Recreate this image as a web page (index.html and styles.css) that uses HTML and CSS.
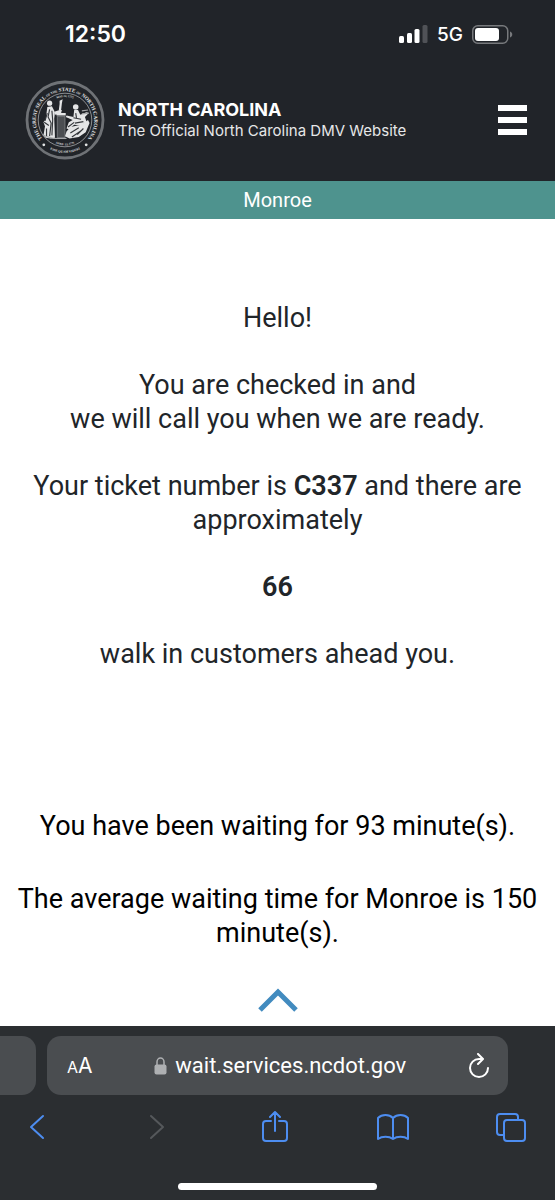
FILE: index.html
```html
<!DOCTYPE html>
<html lang="en">
<head>
    <meta charset="UTF-8">
    <meta name="viewport" content="width=device-width, initial-scale=1.0">
    <title>NCDMV - Monroe</title>
    <link rel="stylesheet" href="styles.css">
</head>
<body>
    <div class="status-bar">
        <span class="time">12:50</span>
        <div class="status-icons">
            <svg class="signal" viewBox="0 0 29 18" aria-hidden="true">
                <rect x="0" y="11" width="5" height="7" rx="1.5"/>
                <rect x="8" y="8" width="5" height="10" rx="1.5"/>
                <rect x="15.5" y="4" width="5" height="14" rx="1.5"/>
                <rect class="dim" x="23.5" y="0" width="5" height="18" rx="1.5"/>
            </svg>
            <span class="network">5G</span>
            <svg class="battery" viewBox="0 0 41 19" aria-hidden="true">
                <rect class="shell" x="0.75" y="0.75" width="35" height="17.5" rx="5"/>
                <rect x="3" y="3" width="24" height="13" rx="3"/>
                <path class="cap" d="M38 6.5c3 1 3 5 0 6z"/>
            </svg>
        </div>
    </div>

    <header class="header">
        <a class="brand" href="#">
            <svg class="seal" viewBox="0 0 200 200" aria-hidden="true">
                <defs>
                    <path id="ring-top" d="M48 152A73 73 0 1 1 152 152"/>
                    <path id="ring-bottom" d="M44 160A82 82 0 0 0 156 160"/>
                    <path id="date-top" d="M50 72A57 57 0 0 1 150 72"/>
                    <path id="date-bottom" d="M55 144A63 63 0 0 0 145 144"/>
                </defs>
                <circle class="rim" cx="100" cy="100" r="95"/>
                <circle class="line" cx="100" cy="100" r="67"/>
                <text class="seal-text"><textPath href="#ring-top" startOffset="50%">THE GREAT SEAL <tspan class="tiny">OF THE</tspan> STATE <tspan class="tiny">OF</tspan> NORTH CAROLINA</textPath></text>
                <text class="seal-text tiny"><textPath href="#ring-bottom" startOffset="50%">ESSE QUAM VIDERI</textPath></text>
                <text class="seal-text date"><textPath href="#date-top" startOffset="50%">MAY 20, 1775</textPath></text>
                <text class="seal-text date"><textPath href="#date-bottom" startOffset="50%">APRIL 12, 1776</textPath></text>
                <circle cx="47" cy="162" r="3.5"/>
                <circle cx="153" cy="162" r="3.5"/>
                <g transform="translate(2 6) scale(1.92)">
                    <!-- Liberty, standing -->
                    <circle cx="31" cy="27" r="3.4"/>
                    <path d="M28 32l6-1 4 8-1 8 1 25-6 1-6-1-3-3 2-12-2-5 3-4z"/>
                    <path class="fold" d="M31 35l-2 10 4 8-2 17M34 37l1 12-1 20M28 40l-3 10M24 52l6 4M27 60v10"/>
                    <!-- pole and pillar -->
                    <path d="M44 24l4-2-1 5-1 9h-3l1-8zM38 38l6-2h3l-1 4-8 2zM40 40h12v3H40z"/>
                    <path class="pillar" d="M41 44h10v28H41z"/>
                    <path class="stroke" d="M38 73h15"/>
                    <!-- Plenty, seated -->
                    <circle cx="65" cy="32" r="3.6"/>
                    <path d="M63 36h5l3 6 8-3 3 1-5 5 2 6-7 5-9-1-7 6-3-1 3-8 5-3-9-4 1-2 9 2z"/>
                    <path d="M58 58l14-3 9-6 2 4-5 12-9 6-12 2-6-3 2-6z"/>
                    <path class="fold" d="M62 46l10 2M64 53l11-2M58 66l11-7M60 71l12-8M65 40l1 6M67 68l8-8M55 58l8-6"/>
                    <path class="stroke" d="M73 37l8-1M73 41l9-1M22 68c7 5 11 4 16 5"/>
                </g>
            </svg>
            <span class="brand-text">
                <strong>NORTH CAROLINA</strong>
                <span>The Official North Carolina DMV Website</span>
            </span>
        </a>
        <button class="menu-button" aria-label="Menu">
            <span></span>
            <span></span>
            <span></span>
        </button>
    </header>

    <div class="location">Monroe</div>

    <main class="content">
        <div class="ticket">
            <p>Hello!</p>
            <p>You are checked in and<br>we will call you when we are ready.</p>
            <p>Your ticket number is <b>C337</b> and there are approximately</p>
            <p><b>66</b></p>
            <p>walk in customers ahead you.</p>
        </div>
        <div class="waiting">
            <p>You have been waiting for 93 minute(s).</p>
            <p>The average waiting time for Monroe is 150 minute(s).</p>
        </div>
        <button class="expand" aria-label="Show more">
            <svg viewBox="0 0 40 24"><path d="M2 22L20 4l18 18"/></svg>
        </button>
    </main>

    <footer class="browser">
        <div class="tabs">
            <div class="previous-tab"></div>
            <div class="address">
                <button class="text-size" aria-label="Text size"><small>A</small>A</button>
                <a class="url" href="#">
                    <svg class="lock" viewBox="0 0 13 18" aria-hidden="true">
                        <rect x="0.5" y="7.5" width="12" height="10" rx="2"/>
                        <path d="M3 8V5a3.5 4 0 0 1 7 0v3"/>
                    </svg>
                    wait.services.ncdot.gov
                </a>
                <button class="reload" aria-label="Reload">
                    <svg viewBox="0 0 22 26"><path d="M14 6h-3A9 9 0 1 0 20 15M10 1l5 5-5 5"/></svg>
                </button>
            </div>
        </div>
        <nav class="toolbar">
            <button aria-label="Back"><svg viewBox="0 0 32 32"><path d="M21 5L9 16l12 11"/></svg></button>
            <button class="off" aria-label="Forward"><svg viewBox="0 0 32 32"><path d="M11 5l12 11-12 11"/></svg></button>
            <button aria-label="Share"><svg viewBox="0 0 32 32"><path d="M12 10H7a3 3 0 0 0-3 3v14a3 3 0 0 0 3 3h18a3 3 0 0 0 3-3V13a3 3 0 0 0-3-3h-5M16 20V1M11 6l5-5 5 5"/></svg></button>
            <button aria-label="Bookmarks"><svg viewBox="0 0 32 32"><path d="M16 7C12 3 5 3 1 7v21c4-3 11-3 15 0 4-3 11-3 15 0V7c-4-4-11-4-15 0zM16 7v21"/></svg></button>
            <button aria-label="Tabs"><svg viewBox="0 0 32 32"><rect x="9" y="9" width="21" height="21" rx="3"/><path d="M9 24H5a3 3 0 0 1-3-3V6a3 3 0 0 1 3-3h15a3 3 0 0 1 3 3v3"/></svg></button>
        </nav>
        <div class="home-indicator"></div>
    </footer>
</body>
</html>
```
FILE: styles.css
```css
* {
    box-sizing: border-box;
}
body {
    font-family: Roboto, sans-serif;
    background-color: #fff;
    color: #212529;
    margin: 0;
    min-height: 100vh;
    display: flex;
    flex-direction: column;
}
button {
    background: none;
    border: none;
    padding: 0;
    color: inherit;
    font: inherit;
    cursor: pointer;
}
a {
    color: inherit;
    text-decoration: none;
}
svg {
    display: block;
}

/* Phone status bar */
.status-bar {
    display: flex;
    align-items: center;
    justify-content: space-between;
    height: 68px;
    padding: 0 42px 0 65px;
    background-color: #212429;
    color: #fff;
    font-family: Inter, sans-serif;
}
.time {
    font-size: 23px;
    font-weight: 600;
}
.status-icons {
    display: flex;
    align-items: center;
    gap: 9px;
}
.network {
    font-size: 19px;
    font-weight: 500;
}
.signal {
    width: 29px;
    height: 18px;
    fill: #fff;
}
.signal .dim {
    fill: #505257;
}
.battery {
    width: 41px;
    height: 19px;
    fill: #fff;
}
.battery .shell {
    fill: none;
    stroke: #77797c;
    stroke-width: 1.5;
}
.battery .cap {
    fill: #77797c;
}

/* Site header */
.header {
    display: flex;
    align-items: center;
    justify-content: space-between;
    height: 113px;
    padding: 0 28px 9px 25px;
    background-color: #212429;
    color: #fff;
}
.brand {
    display: flex;
    align-items: center;
    gap: 13px;
}
.seal {
    width: 80px;
    height: 80px;
    fill: #e4e5e6;
}
.seal .rim {
    fill: none;
    stroke: #6f7276;
    stroke-width: 7;
}
.seal .line {
    fill: none;
    stroke: #a5a7a9;
    stroke-width: 2;
}
.seal .stroke {
    fill: none;
    stroke: #a5a7a9;
    stroke-width: 1.5;
}
.seal .pillar {
    fill: #4b4e52;
    stroke: #85888b;
    stroke-width: 1;
}
.seal .fold {
    fill: none;
    stroke: #34373b;
    stroke-width: 1.5;
}
.seal-text {
    font-family: "Liberation Serif", serif;
    font-size: 13px;
    font-weight: bold;
    text-anchor: middle;
}
.seal .tiny {
    font-size: 8px;
}
.seal .date {
    font-size: 7px;
}
.brand-text {
    display: flex;
    flex-direction: column;
    font-family: Inter, sans-serif;
    font-size: 15px;
    line-height: 21px;
    color: #e6e7e8;
}
.brand-text strong {
    font-size: 18px;
    color: #fff;
}
.menu-button {
    display: flex;
    flex-direction: column;
    gap: 6px;
    width: 29px;
}
.menu-button span {
    height: 6px;
    background-color: #fff;
}
.location {
    background-color: #4e938e;
    color: #fff;
    font-size: 20px;
    line-height: 38px;
    text-align: center;
}

/* Ticket details */
.content {
    flex: 1;
    padding: 82px 16px 12px;
    font-size: 27px;
    line-height: 34px;
    text-align: center;
}
.content p {
    margin: 0;
}
.content b {
    font-weight: 600;
}
.ticket {
    display: grid;
    gap: 33px;
}
.waiting {
    display: grid;
    gap: 39px;
    margin-top: 138px;
    color: #000;
}
.expand {
    display: block;
    margin: 38px auto 0;
}
.expand svg {
    width: 40px;
    height: 24px;
    fill: none;
    stroke: #428bbf;
    stroke-width: 5;
}

/* Browser bar */
.browser {
    background-color: #2b2e31;
    padding: 10px 0;
}
.tabs {
    display: flex;
    gap: 11px;
    padding-right: 47px;
}
.previous-tab {
    width: 36px;
    background-color: #4a4d50;
    border-radius: 0 14px 14px 0;
}
.address {
    flex: 1;
    display: flex;
    align-items: center;
    justify-content: space-between;
    height: 59px;
    padding: 0 18px 0 20px;
    background-color: #4a4d50;
    border-radius: 14px;
    color: #fff;
    font-size: 22px;
}
.text-size {
    font-family: Inter, sans-serif;
    font-size: 21px;
}
.text-size small {
    font-size: 16px;
}
.url {
    display: flex;
    align-items: center;
    gap: 8px;
}
.lock {
    width: 13px;
    height: 18px;
    fill: #aeb0b2;
}
.lock path {
    fill: none;
    stroke: #aeb0b2;
    stroke-width: 1.5;
}
.reload svg {
    width: 22px;
    height: 26px;
    fill: none;
    stroke: #fff;
    stroke-width: 2;
    stroke-linecap: round;
    stroke-linejoin: round;
}
.toolbar {
    display: flex;
    justify-content: space-between;
    padding: 16px 28px 0 22px;
}
.toolbar svg {
    width: 32px;
    height: 32px;
    fill: none;
    stroke: #4d8df0;
    stroke-width: 2;
    stroke-linecap: round;
    stroke-linejoin: round;
}
.toolbar .off svg {
    stroke: #55585b;
}
.home-indicator {
    width: 36%;
    height: 7px;
    margin: 40px auto 0;
    background-color: #fff;
    border-radius: 4px;
}
```
